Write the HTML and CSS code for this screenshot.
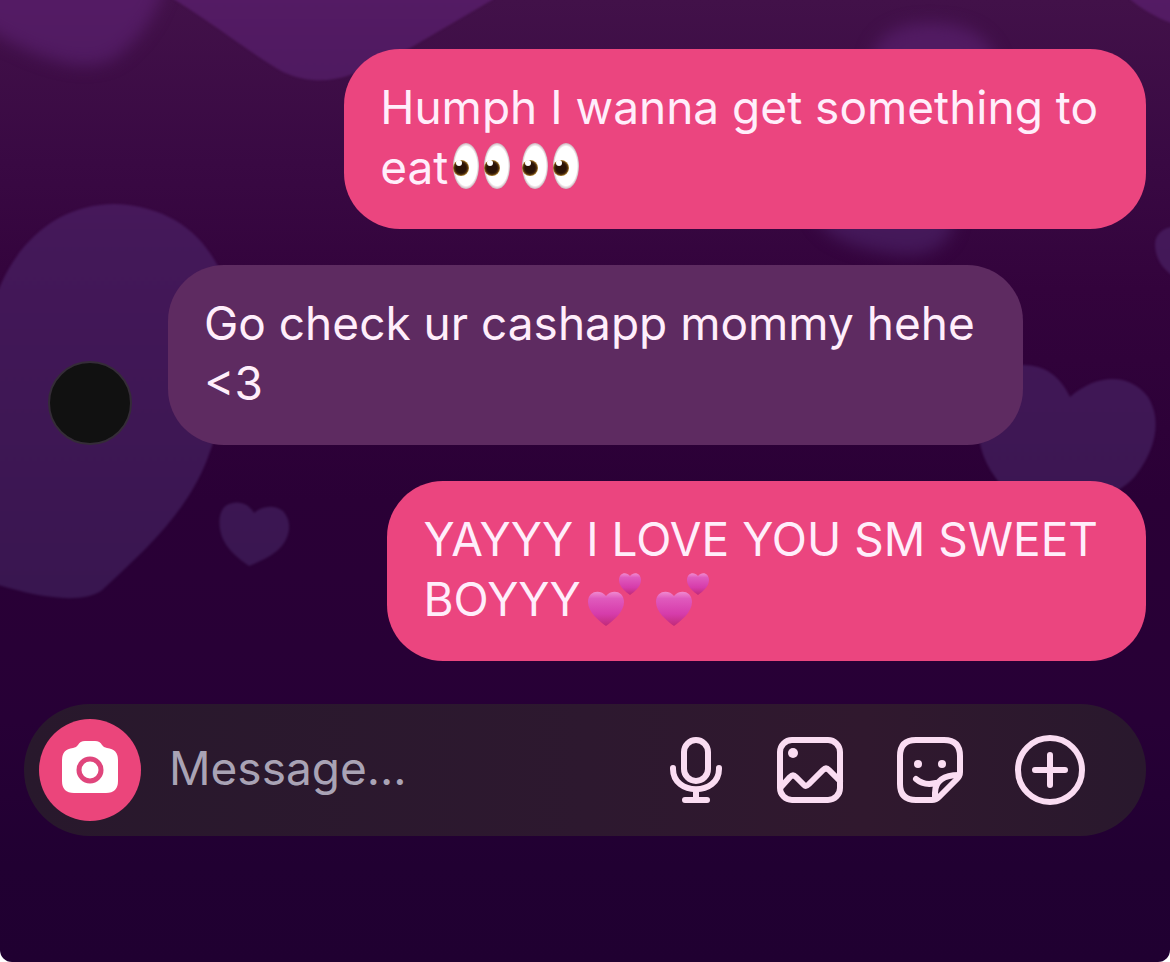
FILE: index.html
```html
<!DOCTYPE html>
<html lang="en">
<head>
    <meta charset="UTF-8">
    <meta name="viewport" content="width=device-width, initial-scale=1">
    <title>Chat</title>
    <link rel="stylesheet" href="styles.css">
</head>
<body>
    <div class="chat">
        <!-- floating hearts wallpaper -->
        <svg class="wallpaper" viewBox="0 0 1170 962" preserveAspectRatio="xMidYMin slice" aria-hidden="true">
            <defs>
                <linearGradient id="heart-fill" gradientUnits="userSpaceOnUse" x1="0" y1="0" x2="0" y2="600">
                    <stop offset="0" stop-color="#541b64"/>
                    <stop offset="0.4" stop-color="#441859"/>
                    <stop offset="1" stop-color="#391650"/>
                </linearGradient>
                <filter id="soft" x="-20%" y="-20%" width="140%" height="140%" color-interpolation-filters="sRGB"><feGaussianBlur stdDeviation="8"/></filter>
                <filter id="edge" color-interpolation-filters="sRGB"><feGaussianBlur stdDeviation="1"/></filter>
            </defs>
            <g fill="url(#heart-fill)">
                <path filter="url(#soft)" d="M-30 -30V18C0 38 30 54 62 62C85 68 105 66 120 54C142 36 158 14 170 -30Z"/>
                <path filter="url(#edge)" d="M130 -30L175 0C220 28 253 55 283 72C307 83 330 82 350 75L410 48L492 0L530 -30Z"/>
                <path filter="url(#edge)" d="M1110 -30L1131 0C1146 12 1158 19 1190 30V-30Z"/>
                <path filter="url(#edge)" d="M-5 300C15 240 60 204 115 204C170 206 205 235 222 275C245 340 228 405 207 460C185 515 145 550 101 591C80 604 40 598 -5 584Z"/>
                <path filter="url(#soft)" d="M870 65C875 30 905 20 945 24C975 27 995 42 998 70L950 235C935 255 915 257 890 253C855 248 825 238 815 215Z"/>
                <path filter="url(#edge)" d="M1180 226C1165 226 1155 233 1155 245C1156 262 1165 272 1180 280Z"/>
                <path filter="url(#edge)" d="M1070 397C1060 376 1045 365 1023 365C987 367 970 405 981 448C988 475 1010 496 1035 520C1065 512 1120 497 1136 475C1156 449 1162 420 1148 397C1129 372 1096 374 1070 397Z"/>
                <path filter="url(#edge)" d="M254 513C248 502 236 500 227 505C217 511 218 530 224 541C229 551 240 560 249 566C261 561 277 554 284 543C291 532 291 520 283 511C275 505 263 505 254 513Z"/>
            </g>
        </svg>

        <!-- shared emoji drawings -->
        <svg class="sprite" aria-hidden="true">
            <defs>
                <linearGradient id="pink-heart" x1="0" y1="0" x2="0" y2="1">
                    <stop offset="0" stop-color="#f08bd0"/>
                    <stop offset="0.2" stop-color="#e05abd"/>
                    <stop offset="0.65" stop-color="#d63cab"/>
                    <stop offset="1" stop-color="#c02a78"/>
                </linearGradient>
                <radialGradient id="eye-white">
                    <stop offset="0.85" stop-color="#ffffff"/>
                    <stop offset="1" stop-color="#c9b3bb"/>
                </radialGradient>
                <radialGradient id="iris">
                    <stop offset="0.6" stop-color="#2a1306"/>
                    <stop offset="0.8" stop-color="#4a2a0b"/>
                    <stop offset="1" stop-color="#b3862f"/>
                </radialGradient>
                <symbol id="eye" viewBox="0 0 26 46">
                    <ellipse cx="13" cy="23" rx="13" ry="23" fill="url(#eye-white)"/>
                    <circle cx="8" cy="25" r="8" fill="url(#iris)"/>
                    <circle cx="6" cy="20" r="3" fill="#fff"/>
                </symbol>
                <symbol id="eyes" viewBox="0 0 58 46">
                    <use href="#eye" x="0" y="0" width="26" height="46"/>
                    <use href="#eye" x="31" y="0" width="26" height="46"/>
                </symbol>
                <symbol id="two-hearts" viewBox="0 0 56 56">
                    <path fill="url(#pink-heart)" d="M19 24C14 17 1 18 1 30C1 40 12 49 19 54C26 49 37 40 37 30C37 18 24 17 19 24Z"/>
                    <path fill="url(#pink-heart)" d="M43 4C39 -1 32 1 32 8C32 15 39 20 43 23C47 20 54 15 54 8C54 1 47 -1 43 4Z"/>
                </symbol>
            </defs>
        </svg>

        <main class="messages">
            <div class="row sent">
                <p class="bubble">Humph I wanna get something to<br>eat<svg class="emoji eyes" role="img" aria-label="eyes"><use href="#eyes"/></svg><svg class="emoji eyes" role="img" aria-label="eyes"><use href="#eyes"/></svg></p>
            </div>
            <div class="row received">
                <div class="avatar"></div>
                <p class="bubble">Go check ur cashapp mommy hehe<br>&lt;3</p>
            </div>
            <div class="row sent">
                <p class="bubble">YAYYY I LOVE YOU SM SWEET<br>BOYYY<svg class="emoji hearts" role="img" aria-label="two hearts"><use href="#two-hearts"/></svg><svg class="emoji hearts" role="img" aria-label="two hearts"><use href="#two-hearts"/></svg></p>
            </div>
        </main>

        <form class="composer">
            <button class="camera" type="button" aria-label="Camera">
                <svg viewBox="0 0 56 60" width="56" height="60">
                    <path fill="#fff" d="M16 5Q18 1 23 1H33Q38 1 40 5Q42 8 45 8Q56 9 56 20V41Q56 53 44 53H12Q0 53 0 41V20Q0 9 11 8Q14 8 16 5Z"/>
                    <circle cx="28" cy="30" r="11" fill="#fff" stroke="#e0457c" stroke-width="5"/>
                </svg>
            </button>
            <input class="message-input" type="text" placeholder="Message..." aria-label="Message">
            <div class="actions">
                <button type="button" aria-label="Voice message">
                    <svg viewBox="0 0 72 72">
                        <rect x="30" y="6" width="24" height="41" rx="12"/>
                        <path d="M19 34V35C19 62 65 62 65 35V34M42 56V66M31 66H53"/>
                    </svg>
                </button>
                <button type="button" aria-label="Photo">
                    <svg viewBox="0 0 72 72">
                        <rect x="6" y="6" width="60" height="60" rx="12"/>
                        <circle class="dot" cx="19" cy="19" r="5"/>
                        <path d="M7 53L16 43Q19 40 22 43L30 51Q32 53 35 50L49 36Q52 33 55 36L66 47"/>
                    </svg>
                </button>
                <button type="button" aria-label="Sticker">
                    <svg viewBox="0 0 72 72">
                        <path d="M22 6H50Q66 6 66 22V38Q66 42 63 45L45 63Q42 66 38 66H22Q6 66 6 50V22Q6 6 22 6Z"/>
                        <path d="M41 65V59C41 47 50 41 65 41M22 45Q30 52 42 49"/>
                        <circle class="dot" cx="24" cy="30" r="4"/>
                        <circle class="dot" cx="48" cy="30" r="4"/>
                    </svg>
                </button>
                <button type="button" aria-label="More">
                    <svg viewBox="0 0 72 72">
                        <circle cx="36" cy="36" r="32"/>
                        <path d="M36 21V51M21 36H51"/>
                    </svg>
                </button>
            </div>
        </form>
    </div>
</body>
</html>
```
FILE: styles.css
```css
* {
    box-sizing: border-box;
}
body {
    margin: 0;
    background-color: #fff;
    font-family: Inter, "Liberation Sans", sans-serif;
    font-size: 46px;
    line-height: 60px;
    color: #ffeefb;
}
.chat {
    position: relative;
    z-index: 0;
    min-height: 100vh;
    padding: 49px 24px 0;
    overflow: hidden;
    border-radius: 0 0 12px 12px;
    background: linear-gradient(#421149 0%, #390943 17%, #33033c 30%, #2a0036 52%, #270036 75%, #210032 90%, #200031 100%);
}
.wallpaper {
    position: absolute;
    inset: 0;
    z-index: -1;
    width: 100%;
    height: 100%;
}
.sprite {
    position: absolute;
    width: 0;
    height: 0;
}
.messages {
    display: flex;
    flex-direction: column;
    gap: 36px;
}
.row {
    display: flex;
    align-items: flex-end;
}
.sent {
    justify-content: flex-end;
}
.received {
    gap: 36px;
    padding-left: 24px;
}
.bubble {
    margin: 0;
    padding: 28px 48px 32px 36px;
    border-radius: 56px;
    background-color: #eb457f;
}
.received .bubble {
    background-color: #5e2b61;
}
.avatar {
    flex: none;
    width: 84px;
    height: 84px;
    border: 2px solid #352c38;
    border-radius: 50%;
    background-color: #111;
}
.emoji {
    vertical-align: top;
}
.eyes {
    width: 58px;
    height: 46px;
    margin: 6px 6px 0 5px;
}
.hearts {
    width: 56px;
    height: 56px;
    margin: 3px 6px 0;
}
.composer {
    display: flex;
    align-items: center;
    margin-top: 43px;
    height: 132px;
    padding: 0 60px 0 15px;
    border-radius: 66px;
    background: linear-gradient(90deg, #28182c, #2d182f 50%, #30182e 75%, #29182d);
}
button {
    display: flex;
    align-items: center;
    justify-content: center;
    padding: 0;
    border: none;
    background: none;
    cursor: pointer;
}
.camera {
    flex: none;
    width: 102px;
    height: 102px;
    border-radius: 50%;
    background-color: #eb457b;
}
.message-input {
    flex: 1;
    min-width: 0;
    padding: 0 28px 4px;
    border: none;
    outline: none;
    background: none;
    font: inherit;
    color: inherit;
}
.message-input::placeholder {
    color: #a9a3b5;
    opacity: 1;
}
.actions {
    display: flex;
    gap: 48px;
}
.actions svg {
    width: 72px;
    height: 72px;
    fill: none;
    stroke: #fadcf2;
    stroke-width: 6;
    stroke-linecap: round;
    stroke-linejoin: round;
}
.actions .dot {
    fill: #fadcf2;
    stroke: none;
}
```
